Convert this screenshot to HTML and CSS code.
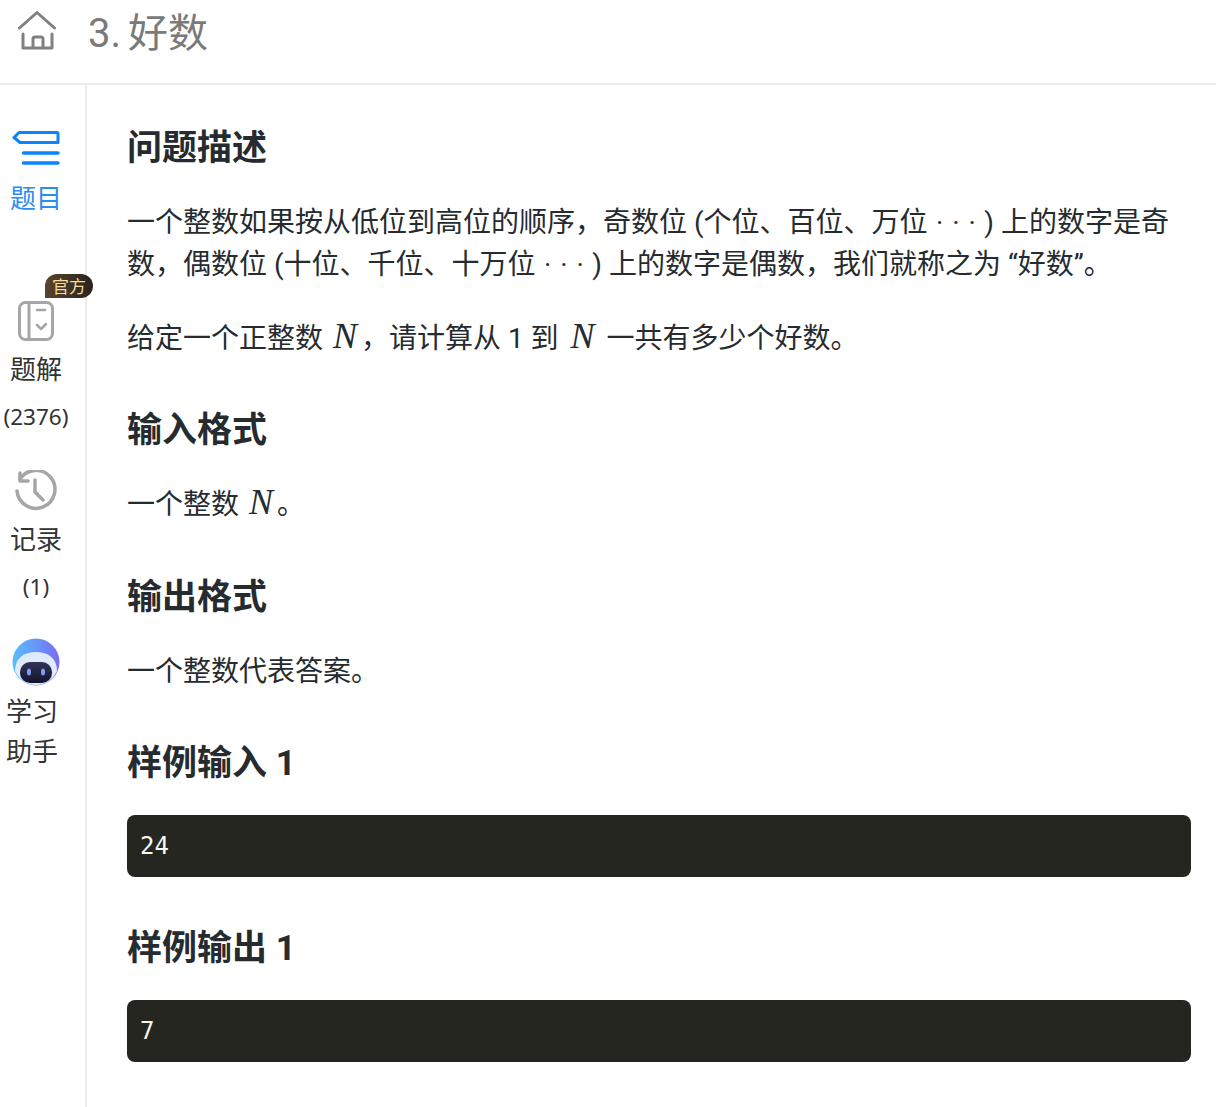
FILE: index.html
```html
<!DOCTYPE html>
<html lang="zh-CN">
<head>
    <meta charset="UTF-8">
    <title>3. 好数</title>
    <link rel="stylesheet" href="styles.css">
</head>
<body>
    <header class="topbar">
        <svg class="home-icon" viewBox="0 0 40 40" width="40" height="40">
            <path d="M2.500 17 L20 1.500 L37.500 17 M6 23 V37 H35 V23 M16 37 V28 Q16 26 18 26 H24 Q26 26 26 28 V37" fill="none" stroke="#808080" stroke-width="3" stroke-linecap="round" stroke-linejoin="round"/>
        </svg>
        <span class="title">3. 好数</span>
    </header>

    <div class="main">
        <!-- Left tabs -->
        <aside class="sidebar">
            <div class="tab tab-active">
                <svg viewBox="0 0 48 38" width="48" height="38">
                    <path d="M7 2.500 H45 Q46 2.500 46 4 V12.500 H8 L2 7.500 Z" fill="none" stroke="#0a84ff" stroke-width="3" stroke-linejoin="round"/>
                    <path d="M11.500 23 H46 M11.500 33 H46" stroke="#0a84ff" stroke-width="3.500" stroke-linecap="round"/>
                </svg>
                <div class="tab-label">题目</div>
            </div>

            <div class="tab">
                <span class="badge">官方</span>
                <svg viewBox="0 0 38 42" width="38" height="42">
                    <rect x="2.500" y="2.500" width="33" height="37" rx="6" fill="none" stroke="#a6a6a6" stroke-width="3"/>
                    <path d="M12 2 V40" stroke="#a6a6a6" stroke-width="3"/>
                    <path d="M20 10 H28 M20 25 L24 29 L29 24" fill="none" stroke="#a6a6a6" stroke-width="2.500" stroke-linecap="round" stroke-linejoin="round"/>
                </svg>
                <div class="tab-label">题解</div>
                <div class="tab-count">(2376)</div>
            </div>

            <div class="tab">
                <svg viewBox="0 0 42 42" width="42" height="42">
                    <path d="M5 9 A19 19 0 1 1 2 21" fill="none" stroke="#a6a6a6" stroke-width="3.500" stroke-linecap="round"/>
                    <path d="M5 3 V11 H13" fill="none" stroke="#a6a6a6" stroke-width="3.500" stroke-linecap="round" stroke-linejoin="round"/>
                    <path d="M20 10 V22 L28 30" fill="none" stroke="#a6a6a6" stroke-width="3.500" stroke-linecap="round" stroke-linejoin="round"/>
                </svg>
                <div class="tab-label">记录</div>
                <div class="tab-count">(1)</div>
            </div>

            <div class="tab tab-helper">
                <svg viewBox="0 0 48 48" width="48" height="48">
                    <defs>
                        <linearGradient id="dome" x1="0" y1="0" x2="1" y2="0">
                            <stop offset="0" stop-color="#55c0ff"/>
                            <stop offset="1" stop-color="#7a6cf0"/>
                        </linearGradient>
                        <linearGradient id="face" x1="0" y1="0" x2="0" y2="1">
                            <stop offset="0" stop-color="#33335a"/>
                            <stop offset="1" stop-color="#14142a"/>
                        </linearGradient>
                    </defs>
                    <circle cx="24" cy="24" r="23.500" fill="url(#dome)"/>
                    <path d="M3 33 C3 20 12 14 24 14 C36 14 45 20 45 33 C40 43 32 47 24 47 C16 47 8 43 3 33 Z" fill="#dfeafd"/>
                    <rect x="8" y="24" width="32" height="21" rx="10" fill="url(#face)"/>
                    <ellipse cx="17" cy="34" rx="2" ry="3.500" fill="#7f9cf5"/>
                    <ellipse cx="31" cy="34" rx="2" ry="3.500" fill="#7f9cf5"/>
                </svg>
                <div class="tab-label">学习<br>助手</div>
            </div>
        </aside>

        <!-- Problem text -->
        <div class="content">
            <h2>问题描述</h2>
            <p>一个整数如果按从低位到高位的顺序，奇数位 (个位、百位、万位 <span class="dots">· · ·</span> ) 上的数字是奇数，偶数位 (十位、千位、十万位 <span class="dots">· · ·</span> ) 上的数字是偶数，我们就称之为 “好数”。</p>
            <p>给定一个正整数 <i class="math">N</i>，请计算从 1 到 <i class="math math-wide">N</i> 一共有多少个好数。</p>

            <h2>输入格式</h2>
            <p>一个整数 <i class="math">N</i>。</p>

            <h2>输出格式</h2>
            <p>一个整数代表答案。</p>

            <h2>样例输入 1</h2>
            <pre class="code">24</pre>

            <h2>样例输出 1</h2>
            <pre class="code">7</pre>
        </div>
    </div>
</body>
</html>
```

FILE: styles.css
```css
body {
    margin: 0;
    height: 1107px;
    overflow: hidden;
    background-color: #fff;
    color: #262b30;
    font-family: Roboto, "Noto Sans CJK SC", sans-serif;
}

.topbar {
    display: flex;
    align-items: flex-start;
    height: 83px;
    padding-left: 17px;
    border-bottom: 2px solid #ececec;
}

.home-icon {
    margin-top: 11px;
}

.title {
    margin-left: 31px;
    font-size: 40px;
    line-height: 68px;
    word-spacing: -3px;
    color: #7a7a7a;
}

.main {
    display: flex;
}

.sidebar {
    width: 85px;
    height: 1022px;
    flex-shrink: 0;
    border-right: 2px solid #ececec;
}

.tab {
    position: relative;
    box-sizing: border-box;
    display: flex;
    flex-direction: column;
    align-items: center;
    width: 72px;
    height: 170px;
    padding-top: 45px;
    color: #333;
}

.tab svg {
    flex-shrink: 0;
}

.tab-label {
    margin-top: 6px;
    font-family: "Noto Sans CJK SC", sans-serif;
    font-size: 26px;
    line-height: 40px;
}

.tab-active .tab-label {
    margin-top: 9px;
    color: #2d8cf0;
}

.tab-count {
    margin-top: 9px;
    font-family: "Noto Sans", sans-serif;
    font-size: 22.500px;
    line-height: 40px;
}

.tab-helper {
    margin-top: -2px;
}

.tab-helper .tab-label {
    margin-top: 4px;
    margin-left: -8px;
}

.badge {
    position: absolute;
    top: 19px;
    left: 45px;
    padding: 0 7px;
    border-radius: 12px 12px 12px 0;
    background: linear-gradient(90deg, #5a4529, #26231f);
    color: #f8d999;
    font-family: "Noto Sans CJK SC", sans-serif;
    font-size: 17px;
    line-height: 24px;
    white-space: nowrap;
}

.content {
    flex: 1;
    padding: 41px 25px 0 40px;
}

h2 {
    margin: 0 0 31px;
    font-size: 35px;
    font-weight: 700;
    line-height: 45px;
}

p {
    margin: 0 0 32px;
    font-size: 28px;
    line-height: 42px;
}

p + h2,
.code + h2 {
    margin-top: 48.400px;
}

.math {
    margin: 0 4px 0 3px;
    font-family: "Liberation Serif", serif;
    font-size: 36px;
    line-height: 0;
}

.math-wide {
    margin: 0 5px;
}

.dots {
    margin: 0 1.500px;
    word-spacing: 2px;
}

.code {
    margin: -2px 0 0;
    height: 62px;
    padding: 0 13px;
    border-radius: 8px;
    background-color: #252620;
    color: #f8f8f2;
    font-family: "DejaVu Sans Mono", monospace;
    font-size: 24px;
    line-height: 62px;
}
```
